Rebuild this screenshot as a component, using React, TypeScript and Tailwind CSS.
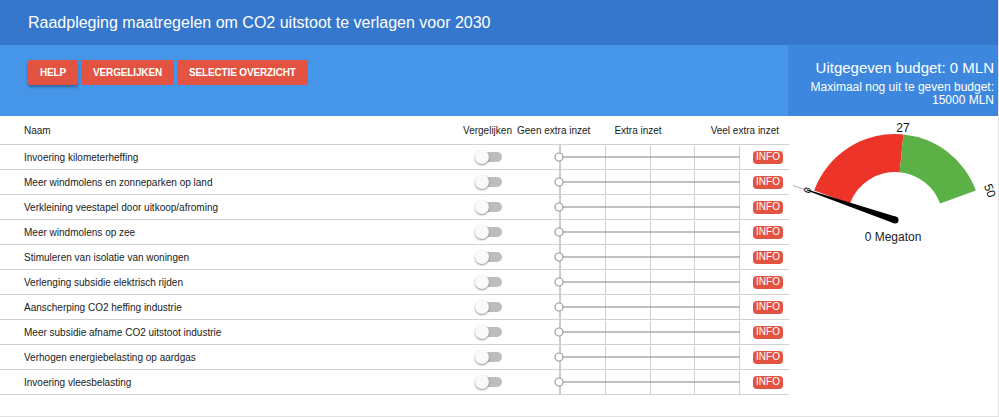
import React from "react";

const rows = [
  "Invoering kilometerheffing",
  "Meer windmolens en zonneparken op land",
  "Verkleining veestapel door uitkoop/afroming",
  "Meer windmolens op zee",
  "Stimuleren van isolatie van woningen",
  "Verlenging subsidie elektrisch rijden",
  "Aanscherping CO2 heffing industrie",
  "Meer subsidie afname CO2 uitstoot industrie",
  "Verhogen energiebelasting op aardgas",
  "Invoering vleesbelasting",
];

function Toggle() {
  return (
    <div className="relative w-[27px] h-[14px]">
      <div className="absolute left-[3px] top-[2px] w-[24px] h-[10px] rounded-full bg-[#bdbdbd]" />
      <div className="absolute left-0 top-0 w-[14px] h-[14px] rounded-full bg-[#fafafa] shadow-[0_1px_2px_rgba(0,0,0,0.45)]" />
    </div>
  );
}

function Slider() {
  return (
    <svg width="235" height="24" viewBox="0 0 235 24" className="block">
      <line x1="45" y1="0" x2="45" y2="25" stroke="#9a9a9a" strokeWidth="1" />
      {[90.5, 135.5, 179.5, 224.5].map((x) => (
        <line key={x} x1={x} y1="1" x2={x} y2="24" stroke="#d0d0d0" strokeWidth="1" />
      ))}
      <line x1="44" y1="12" x2="225" y2="12" stroke="#ababab" strokeWidth="1.5" />
      <circle cx="44" cy="12" r="4" fill="#fff" stroke="#9a9a9a" strokeWidth="1.2" />
    </svg>
  );
}

function Gauge() {
  return (
    <svg width="210" height="135" viewBox="0 0 210 135" className="block">
      <path
        d="M 25.19 74.59 A 86 86 0 0 1 114.39 18.41 L 110.68 56.23 A 48 48 0 0 0 60.90 87.58 Z"
        fill="#ec3428"
      />
      <path
        d="M 114.39 18.41 A 86 86 0 0 1 186.81 74.59 L 151.10 87.58 A 48 48 0 0 0 110.68 56.23 Z"
        fill="#5bb046"
      />
      <text x="114" y="16" textAnchor="middle" fontSize="12" fill="#111" fontFamily="'Liberation Sans', Arial, sans-serif">27</text>
      <text
        x="197"
        y="76"
        textAnchor="middle"
        fontSize="12"
        fill="#111"
        fontFamily="'Liberation Sans', Arial, sans-serif"
        transform="rotate(70 197 76)"
      >
        50
      </text>
      <line x1="18" y1="74" x2="4" y2="69.5" stroke="#999" strokeWidth="0.8" />
      <polygon points="107.09,100.67 104.91,107.33 17.8,74.4 18.2,73.6" fill="#000" />
      <circle cx="106" cy="104" r="3.5" fill="#000" />
      <text
        x="18"
        y="78"
        textAnchor="middle"
        fontSize="10"
        fill="#111"
        fontFamily="'Liberation Sans', Arial, sans-serif"
        transform="rotate(-70 18 74)"
      >
        0
      </text>
      <text x="104" y="125" textAnchor="middle" fontSize="12" fill="#222" fontFamily="'Liberation Sans', Arial, sans-serif">0 Megaton</text>
    </svg>
  );
}

export default function App() {
  return (
    <div
      className="w-[999px] h-[417px] box-border border-r border-b border-[#e2e2e2] bg-white overflow-hidden flex flex-col"
      style={{ fontFamily: "'Liberation Sans', Arial, Helvetica, sans-serif" }}
    >
      <div className="h-[45px] shrink-0 bg-[#3577cc] flex items-center pl-[28px]">
        <span className="text-white text-[16px]">Raadpleging maatregelen om CO2 uitstoot te verlagen voor 2030</span>
      </div>
      <div className="h-[71px] shrink-0 flex bg-[#4596e9]">
        <div className="flex-1 flex items-start gap-[3px] pl-[28px] pt-[15px]">
          <button className="h-[25px] px-3 bg-[#e25441] text-white text-[10px] font-bold tracking-[-0.15px] rounded-[2px] shadow-[0_2px_3px_rgba(0,0,0,0.35)]">HELP</button>
          <button className="h-[25px] px-3 bg-[#e25441] text-white text-[10px] font-bold tracking-[-0.15px] rounded-[2px]">VERGELIJKEN</button>
          <button className="h-[25px] px-3 bg-[#e25441] text-white text-[10px] font-bold tracking-[-0.15px] rounded-[2px]">SELECTIE OVERZICHT</button>
        </div>
        <div className="w-[210px] bg-[#3d88de] flex flex-col items-end pr-[4px] pt-[14px] text-white text-right">
          <div className="text-[15px] leading-[18px]">Uitgegeven budget: 0 MLN</div>
          <div className="text-[12px] leading-[13px] mt-[4px]">Maximaal nog uit te geven budget:</div>
          <div className="text-[12px] leading-[13px]">15000 MLN</div>
        </div>
      </div>
      <div className="flex flex-1">
        <div className="w-[789px] text-[10px] text-[#1a1a1a]">
          <div className="h-[29px] flex items-center border-b border-[#d2d2d2]">
            <div className="w-[460px] pl-[24px]">Naam</div>
            <div className="w-[55px] text-center">Vergelijken</div>
            <div className="flex-1 flex items-center pl-[2px] pr-[10px]">
              <span>Geen extra inzet</span>
              <span className="ml-[24px]">Extra inzet</span>
              <span className="ml-auto">Veel extra inzet</span>
            </div>
          </div>
          {rows.map((r) => (
            <div key={r} className="h-[25px] flex items-center border-b border-[#d2d2d2]">
              <div className="w-[460px] pl-[24px]">{r}</div>
              <div className="w-[55px] flex pl-[15px]">
                <Toggle />
              </div>
              <div className="w-[235px]">
                <Slider />
              </div>
              <div className="w-[39px] pl-[3px]">
                <div className="w-[30px] h-[13px] rounded-[4px] bg-[#e25441] text-white text-[10px] leading-none flex items-center justify-center">INFO</div>
              </div>
            </div>
          ))}
        </div>
        <div className="flex-1">
          <Gauge />
        </div>
      </div>
    </div>
  );
}
